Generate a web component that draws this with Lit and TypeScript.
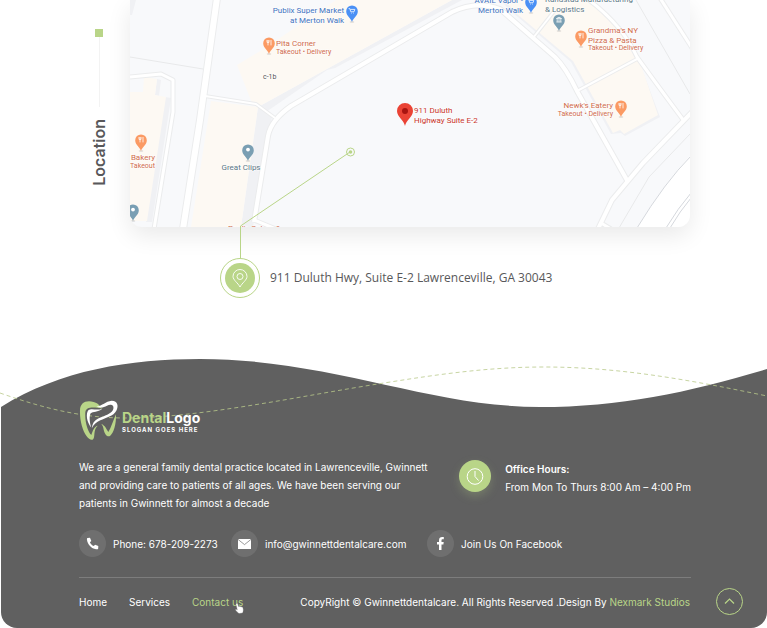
import { LitElement, html, svg, css } from "lit";
import { customElement } from "lit/decorators.js";

type Pin = { x: number; y: number; color: string; kind: "food" | "shop" | "bank" | "dot" };
type Label = { x: number; y: number; text: string; tone: string; small?: boolean; end?: boolean; mid?: boolean };

const ORANGE = "#fb9a63";
const BLUE = "#4a90f5";
const SLATE = "#7a9fb3";

const PINS: Pin[] = [
  { x: 352, y: 22, color: BLUE, kind: "shop" },
  { x: 269, y: 54, color: ORANGE, kind: "food" },
  { x: 531, y: 13, color: BLUE, kind: "shop" },
  { x: 559, y: 31, color: SLATE, kind: "bank" },
  { x: 581, y: 47, color: ORANGE, kind: "food" },
  { x: 621, y: 117, color: ORANGE, kind: "food" },
  { x: 141, y: 151, color: ORANGE, kind: "food" },
  { x: 248, y: 161, color: SLATE, kind: "dot" },
  { x: 133, y: 221, color: SLATE, kind: "dot" },
];

const LABELS: Label[] = [
  { x: 344, y: 13, text: "Publix Super Market", tone: "blue", end: true },
  { x: 344, y: 23, text: "at Merton Walk", tone: "blue", end: true },
  { x: 276, y: 46, text: "Pita Corner", tone: "orange" },
  { x: 276, y: 54, text: "Takeout • Delivery", tone: "orange", small: true },
  { x: 263, y: 79, text: "c-1b", tone: "dark", small: true },
  { x: 523, y: 3, text: "AVAIL Vapor -", tone: "blue", end: true },
  { x: 523, y: 13, text: "Merton Walk", tone: "blue", end: true },
  { x: 545, y: 2, text: "Randstad Manufacturing", tone: "slate" },
  { x: 545, y: 12, text: "& Logistics", tone: "slate" },
  { x: 588, y: 33, text: "Grandma's NY", tone: "orange" },
  { x: 588, y: 43, text: "Pizza & Pasta", tone: "orange" },
  { x: 588, y: 50, text: "Takeout • Delivery", tone: "orange", small: true },
  { x: 613, y: 108, text: "Newk's Eatery", tone: "orange", end: true },
  { x: 613, y: 116, text: "Takeout • Delivery", tone: "orange", small: true, end: true },
  { x: 414, y: 113, text: "911 Duluth", tone: "red" },
  { x: 414, y: 123, text: "Highway Suite E-2", tone: "red" },
  { x: 155, y: 160, text: "Bakery", tone: "orange", end: true },
  { x: 155, y: 168, text: "Takeout", tone: "orange", small: true, end: true },
  { x: 241, y: 170, text: "Great Clips", tone: "slate", mid: true },
  { x: 228, y: 231, text: "Paul's Cuban &", tone: "orange" },
];

const ROADS: { d: string; w: number }[] = [
  { d: "M217 -2 L200 120 L183 229", w: 6 },
  { d: "M130 77 L161 74 L173 80 L173 112 L154 229", w: 3 },
  { d: "M205 96 L256 104 L275 118", w: 2 },
  { d: "M254 222 L268 136 Q271 120 291 106 L452 12 Q476 0 500 9 L555 57 Q566 68 577 91 L628 182", w: 4 },
  { d: "M254 220 L276 229", w: 3 },
  { d: "M533 38 L555 10", w: 2 },
  { d: "M577 91 L637 59", w: 2 },
  { d: "M585 -3 Q622 24 637 57 Q655 82 684 121", w: 3 },
  { d: "M692 112 L643 163 L612 200 L598 229", w: 4 },
  { d: "M601 223 L611 229", w: 3 },
  { d: "M660 -2 L692 48", w: 3 },
];

const pinGlyph = (kind: Pin["kind"]) => {
  switch (kind) {
    case "food":
      return svg`<path class="glyph" d="M-2 -14 v2.4 M-1 -14 v2.4 M0 -14 v2.4 M-2 -11.6 H0 M-1 -11.6 V-8.6 M2 -14 V-8.6"/>`;
    case "shop":
      return svg`<path class="glyph" d="M-3.4 -13.4 h1.2 l1 3.2 h3.2 l.8 -2.4 h-4.4 M-1 -8.8 h.6 M1.4 -8.8 h.6"/>`;
    case "bank":
      return svg`<path class="glyph" d="M-2.6 -12.4 L0 -13.8 L2.6 -12.4 Z M-1.8 -11.8 v2.6 M0 -11.8 v2.6 M1.8 -11.8 v2.6 M-2.6 -9 h5.2"/>`;
    default:
      return svg`<circle cx="0" cy="-11.4" r="1.9" fill="#fff"/>`;
  }
};

@customElement("location-map")
class LocationMap extends LitElement {
  static styles = css`
    :host {
      display: block;
      height: 227px;
      overflow: hidden;
      border-radius: 0 0 12px 12px;
      background: #f8f9fb;
      box-shadow: 0 8px 24px rgba(0, 0, 0, 0.09);
    }
    svg {
      display: block;
      width: 100%;
      height: 100%;
    }
    .building { fill: #fdf9f3; }
    .shade { fill: #f0f1f4; }
    .casing { fill: none; stroke: #ebeced; stroke-linejoin: round; }
    .road { fill: none; stroke: #ffffff; stroke-linejoin: round; }
    .lot { fill: none; stroke: #e8e9ea; stroke-width: 1; }
    .kerb { fill: none; stroke: #d5d8dd; stroke-width: 1; }
    .glyph { fill: none; stroke: #fff; stroke-width: 0.8; }
    text {
      font: 400 8px Roboto, sans-serif;
      paint-order: stroke;
      stroke: rgba(255, 255, 255, 0.8);
      stroke-width: 1px;
    }
    .small { font-size: 7px; }
    .end { text-anchor: end; }
    .mid { text-anchor: middle; }
    .blue { fill: #4072be; }
    .orange { fill: #d06c4c; }
    .slate { fill: #5b7785; }
    .red { fill: #c9352b; }
    .dark { fill: #555; }
  `;

  render() {
    return html`
      <svg viewBox="130 0 560 227" preserveAspectRatio="xMinYMax slice" role="img" aria-label="Map of 911 Duluth Highway">
        <path class="shade" d="M130 0 H136 L132 15 H130Z" />
        <path class="shade" d="M157 79 L161 80 L159 96 L171 98 L152 222 H146 L165 97 L155 95Z" />
        <path class="building" d="M144 77 L157 79 L155 95 L166 97 L147 221 H130 V92 H143Z" />
        <path class="shade" d="M258 107 L452 0 H462 L335 68 L327 70 L266 112Z" />
        <path class="building" d="M336 0 H452 L258 107 L252 103 L237 65 L262 50Z" />
        <path class="shade" d="M258 107 L272 117 L253 227 H241Z" />
        <path class="building" d="M211 101 L258 107 L241 227 H191Z" />
        <path class="shade" d="M500 0 L512 12 L571 62 L611 134 L621 133 L625 136 L660 117 L640 64 L610 20Z" />
        <path class="building" d="M504 0 H588 L612 20 L640 62 L658 115 L624 134 L620 130 L613 133 L573 61 L517 14Z" />
        <path class="lot" d="M130 57 L203 69 M636 0 L690 94 M690 134 L649 177 L619 228" />
        ${ROADS.map((r) => svg`<path class="casing" d=${r.d} stroke-width=${r.w + 2} />`)}
        ${ROADS.map((r) => svg`<path class="road" d=${r.d} stroke-width=${r.w} />`)}
        <path d="M690 156 Q665 182 637 228 H690Z" fill="#fff" />
        <path class="kerb" d="M691 156 Q665 182 637 228 M691 193 Q678 208 666 228 M691 198 Q680 211 670 228" />
        ${PINS.map(
          (p) => svg`<g transform="translate(${p.x} ${p.y})">
            <ellipse cx="0" cy="0" rx="2.4" ry="1" fill="#000" opacity=".1" />
            <path fill=${p.color} d="M0 0 C-.8 -3.6 -5.8 -6 -5.8 -10.8 A5.8 5.8 0 0 1 5.8 -10.8 C5.8 -6 .8 -3.6 0 0Z" />
            ${pinGlyph(p.kind)}
          </g>`
        )}
        <path fill="#ea4335" d="M405 126 C404 120 397 117 397 111 A8 8 0 0 1 413 111 C413 117 406 120 405 126Z" />
        <circle cx="405" cy="111" r="3" fill="#a81410" />
        ${LABELS.map(
          (l) => svg`<text x=${l.x} y=${l.y}
            class="${l.tone} ${l.small ? "small" : ""} ${l.end ? "end" : ""} ${l.mid ? "mid" : ""}">${l.text}</text>`
        )}
      </svg>
    `;
  }
}

@customElement("dental-logo")
class DentalLogo extends LitElement {
  static styles = css`
    :host { display: flex; align-items: flex-start; gap: 3px; }
    .tooth { display: block; width: 40px; height: 42px; flex: none; }
    .words { padding-top: 9px; }
    .name {
      font: 700 14px/18px Inter, sans-serif;
      color: #fff;
    }
    .name span { color: #b9d588; }
    .slogan {
      font: 700 6px/6px Inter, sans-serif;
      letter-spacing: 1px;
      color: #fff;
      white-space: nowrap;
    }
  `;

  render() {
    return html`
      <svg class="tooth" viewBox="24 15 120 126" aria-hidden="true">
        <path fill="#b9d588" d="M68 21 C45 14 27 24 27 46 C26 76 34 106 47 124 C54 133 62 138 67 132 C73 122 66 106 80 92 C68 96 65 108 61 120 C50 110 41 80 43 52 C45 37 62 35 94 41 C84 30 80 24 68 21Z" />
        <path fill="#b9d588" d="M135 58 C136 88 128 114 117 123 C107 127 101 116 98 104 C97 97 95 92 91 87 C102 91 106 102 112 111 C120 99 126 78 135 58Z" />
        <path fill="#fff" d="M61 98 C47 82 44 56 52 46 C62 38 76 48 94 41 C80 53 66 48 59 55 C54 64 56 84 61 98Z" />
        <path fill="#fff" d="M76 35 C95 32 103 19 122 17 C141 17 143 34 136 47 C128 63 104 68 88 76 C76 82 68 88 63 99 C64 82 74 73 90 67 C108 60 123 54 127 42 C130 29 118 27 108 32 C98 38 88 39 76 35Z" />
      </svg>
      <div class="words">
        <div class="name"><span>Dental</span>Logo</div>
        <div class="slogan">SLOGAN GOES HERE</div>
      </div>
    `;
  }
}

@customElement("app-root")
class AppRoot extends LitElement {
  static styles = css`
    :host {
      display: block;
      background: #fff;
      font: 400 10px/18px Inter, sans-serif;
      color: #fff;
    }
    a { color: inherit; text-decoration: none; }
    svg { display: block; }

    .location {
      display: grid;
      grid-template-columns: 37px 1fr;
      padding: 0 77px 0 93px;
    }
    .side {
      display: flex;
      flex-direction: column;
      align-items: center;
      width: 12px;
      padding-top: 29px;
    }
    .side::before {
      content: "";
      width: 8px;
      height: 8px;
      background: #b9d588;
    }
    .rule { width: 1px; height: 70px; background: #f3f3f3; }
    h2 {
      margin: 12px 0 0;
      font: 600 16px/18px Inter, sans-serif;
      color: #58585a;
      writing-mode: vertical-rl;
      transform: rotate(180deg);
    }
    .address {
      position: relative;
      display: flex;
      align-items: center;
      gap: 10px;
      margin: 31px 0 0 90px;
      font: 400 12px/18px "Open Sans", sans-serif;
      color: #58585a;
    }
    .leader {
      position: absolute;
      left: 19px;
      bottom: 40px;
      width: 117px;
      height: 111px;
    }
    .badge {
      box-sizing: border-box;
      width: 40px;
      height: 40px;
      padding: 4px;
      border: 1px solid #b9d588;
      border-radius: 50%;
      background: #fff;
    }
    .badge svg { border-radius: 50%; background: #b9d588; }

    footer { margin: 57px 0 0; }
    .wave { position: relative; width: 100%; height: 55px; overflow: visible; }
    .body {
      display: flow-root;
      margin: 0 0 1px 1px;
      padding: 0 0 13px 78px;
      border-radius: 0 0 16px 16px;
      background: #606060;
    }
    .inner { padding-right: 76px; }
    dental-logo { position: relative; margin-top: -10px; }
    .about {
      display: flex;
      justify-content: space-between;
      gap: 24px;
      padding-top: 16px;
    }
    p { margin: 0; }
    .intro { flex: 0 1 358px; }
    .hours { display: flex; gap: 14px; white-space: nowrap; padding-top: 2px; }
    .hours strong { display: block; font-weight: 600; }
    .clock {
      width: 32px;
      height: 32px;
      border-radius: 50%;
      background: #b9d588;
      box-shadow: 0 4px 10px rgba(185, 213, 136, 0.25);
    }
    .contacts {
      display: grid;
      grid-template-columns: 152px 196px 1fr;
      margin-top: 18px;
      padding-bottom: 20px;
      border-bottom: 1px solid #7d7d7d;
    }
    .contacts a { display: flex; align-items: center; gap: 7px; white-space: nowrap; }
    .contacts svg { flex: none; border-radius: 50%; background: #6f6f6f; }
    .bottom { display: flex; align-items: center; padding: 10px 24px 0 0; }
    nav { display: flex; gap: 22px; }
    .current { position: relative; color: #b9d588; }
    .hand { position: absolute; right: -1px; bottom: -3px; width: 9px; height: 11px; }
    .copy { margin-left: auto; white-space: nowrap; }
    .copy a { color: #b9d588; }
    .up {
      width: 27px;
      height: 27px;
      margin-left: 26px;
      padding: 0;
      border: 1px solid #b9d588;
      border-radius: 50%;
      background: none;
      cursor: pointer;
    }
  `;

  render() {
    return html`
      <section class="location">
        <div class="side"><span class="rule"></span><h2>Location</h2></div>
        <div>
          <location-map></location-map>
          <div class="address">
            <svg class="leader" viewBox="239 147 117 111" fill="none" stroke="#b9d588" aria-hidden="true">
              <path d="M240.500 258 V226 L350 152" />
              <circle cx="350.500" cy="152" r="4" />
              <circle cx="350.500" cy="152" r="1.800" fill="#b9d588" stroke="none" />
            </svg>
            <span class="badge">
              <svg width="30" height="30" viewBox="0 0 30 30" fill="none" stroke="#fff" aria-hidden="true">
                <path d="M15 24 C13 20 8 17 8 13.500 A7 7 0 0 1 22 13.500 C22 17 17 20 15 24Z" stroke-width=".9" />
                <circle cx="15" cy="13.500" r="3" stroke-width=".9" />
              </svg>
            </span>
            <span>911 Duluth Hwy, Suite E-2 Lawrenceville, GA 30043</span>
          </div>
        </div>
      </section>

      <footer>
        <svg class="wave" viewBox="0 355 767 55" preserveAspectRatio="none" aria-hidden="true">
          <path fill="#606060" d="M1 410 V407 C60 370 130 359 200 359 C330 359 430 407 540 407 C620 407 690 392 767 369 V410Z" />
          <path fill="none" stroke="#b9c98a" stroke-dasharray="4 3" stroke-width=".8"
            d="M0 393 C40 407 80 418 125 418 C200 418 300 396 384 383 C440 374 490 367 544 367 C620 367 690 380 767 396" />
        </svg>
        <div class="body">
          <div class="inner">
            <dental-logo></dental-logo>
            <div class="about">
              <p class="intro">
                We are a general family dental practice located in Lawrenceville, Gwinnett and providing care to
                patients of all ages. We have been serving our patients in Gwinnett for almost a decade
              </p>
              <div class="hours">
                <svg class="clock" viewBox="0 0 32 32" fill="none" stroke="#fff" aria-hidden="true">
                  <circle cx="16" cy="16.500" r="7.800" />
                  <path d="M16 11 V16.500 L19.500 20.500" />
                </svg>
                <p><strong>Office Hours:</strong>From Mon To Thurs 8:00 Am – 4:00 Pm</p>
              </div>
            </div>
            <div class="contacts">
              <a href="tel:678-209-2273">
                <svg width="27" height="27" viewBox="0 0 27 27" aria-hidden="true">
                  <path fill="#fff" d="M8.600 8 L11 7.700 L12.300 11 L10.900 12.200 C11.700 14 12.900 15.200 14.800 16.100 L16.100 14.800 L19.300 16 L19.200 18.400 C19 19.300 18 19.500 17 19.300 C12.400 18.500 8.700 14.700 8 10 C7.900 9 7.800 8.300 8.600 8Z" />
                </svg>
                Phone: 678-209-2273
              </a>
              <a href="mailto:info@gwinnettdentalcare.com">
                <svg width="27" height="27" viewBox="0 0 27 27" aria-hidden="true">
                  <rect x="7" y="9" width="13" height="10" rx=".6" fill="#fff" />
                  <path fill="none" stroke="#6f6f6f" stroke-width=".7" d="M7 9.400 L13.500 14.600 L20 9.400" />
                </svg>
                info@gwinnettdentalcare.com
              </a>
              <a href="#facebook">
                <svg width="27" height="27" viewBox="0 0 27 27" aria-hidden="true">
                  <path fill="#fff" d="M12 20 V14.500 H10 V12 H12 V10.400 C12 8 13.300 7 15.200 7 H16.800 V9.300 H15.600 C14.800 9.300 14.500 9.700 14.500 10.400 V12 H16.700 L16.400 14.500 H14.500 V20Z" />
                </svg>
                Join Us On Facebook
              </a>
            </div>
          </div>
          <div class="bottom">
            <nav>
              <a href="#home">Home</a>
              <a href="#services">Services</a>
              <a class="current" href="#contact">Contact us
                <svg class="hand" viewBox="0 0 9 11" aria-hidden="true">
                  <path fill="#fff" stroke="#606060" stroke-width=".3" d="M1.600 .4 C2.300 .2 2.700 .6 2.900 1.300 L3.500 3.600 C4 3.200 4.600 3.300 4.900 3.700 C5.500 3.300 6 3.500 6.300 3.900 C7.100 3.700 7.700 4 8 5 C8.500 6.600 8.500 8 7.600 10 L4 10.600 C2.800 9.600 1.400 8.300 .4 7 C.3 6.200 1 6 1.800 6.600 L2.300 6.900 L1 1.500 C.9 1 1.100 .6 1.600 .4Z" />
                </svg>
              </a>
            </nav>
            <p class="copy">CopyRight © Gwinnettdentalcare. All Rights Reserved .Design By <a href="#nexmark">Nexmark Studios</a></p>
            <button class="up" type="button" aria-label="Back to top">
              <svg width="25" height="25" viewBox="0 0 25 25" fill="none" stroke="#b9d588" stroke-width="1.200" aria-hidden="true">
                <path d="M8 14.500 L12.500 10 L17 14.500" />
              </svg>
            </button>
          </div>
        </div>
      </footer>
    `;
  }
}
